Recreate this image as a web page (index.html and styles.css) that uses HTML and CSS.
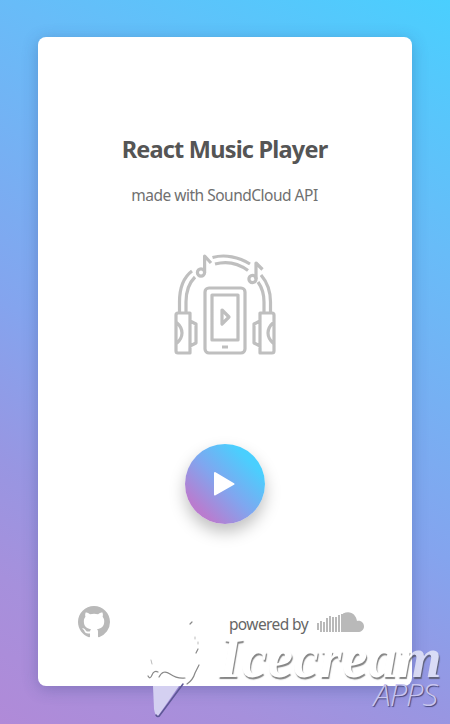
FILE: index.html
```html
<!DOCTYPE html>
<html lang="en">
<head>
<meta charset="utf-8">
<title>React Music Player</title>
<link rel="stylesheet" href="styles.css">
</head>
<body>
<main class="card">
  <h1 class="title">React Music Player</h1>
  <p class="subtitle">made with SoundCloud API</p>
  <svg class="headphones" viewBox="0 0 102 102" fill="none" stroke="#bfbfbf" stroke-width="3.200" stroke-linejoin="round">
    <path d="M5.500 60V49C5.500 35 10 24 18 18M12 60V49C12 38 15 30 21 24M38.500 4.500C51 1 65 4 76 11M41 11C52 8 64 10 74 17.500M87 22C93 29 96.500 38 96.500 49V60M84 29C89 36 90 42 90 49V60" />
    <path d="M2 62Q2 60 4 60H16V100H4Q2 100 2 98ZM2 69Q8 74 8 80T2 91M16 68L22 71V90L16 93M100 62Q100 60 98 60H86V100H98Q100 100 100 98ZM100 69Q94 74 94 80T100 91M86 68L80 71V90L86 93" />
    <rect x="31" y="35" width="40" height="65" rx="4"/>
    <path d="M38 42H64V87H38ZM48 57L55 64L48 71ZM48 94H54" />
    <circle cx="27" cy="19.500" r="3.600"/><path d="M30.600 19.500V3L37 10"/>
    <circle cx="78.500" cy="26" r="3.600"/><path d="M82 26V10L88.500 16.500"/>
  </svg>
  <button class="play" aria-label="Play">
    <svg viewBox="0 0 24 26"><path d="M3 2L21.500 13L3 23.500Z" fill="#fff" stroke="#fff" stroke-width="2" stroke-linejoin="round"/></svg>
  </button>
  <footer class="footer">
    <svg class="github" viewBox="0 0 16 16" fill="#b9b9b9"><path d="M8 0C3.580 0 0 3.580 0 8c0 3.540 2.290 6.530 5.470 7.590.4.070.55-.17.55-.38 0-.19-.01-.82-.01-1.490-2.010.37-2.530-.49-2.690-.94-.09-.23-.48-.94-.82-1.130-.28-.15-.68-.52-.01-.53.63-.01 1.080.58 1.230.82.72 1.210 1.870.87 2.330.66.07-.52.28-.87.51-1.070-1.780-.2-3.640-.89-3.640-3.950 0-.87.31-1.590.82-2.150-.08-.2-.36-1.020.08-2.120 0 0 .67-.21 2.200.82.64-.18 1.320-.27 2-.27s1.360.09 2 .27c1.530-1.040 2.200-.82 2.200-.82.44 1.100.16 1.920.08 2.120.51.56.82 1.270.82 2.150 0 3.070-1.870 3.750-3.650 3.950.29.25.54.73.54 1.480 0 1.070-.01 1.930-.01 2.200 0 .21.15.46.55.38A8.010 8.010 0 0 0 16 8c0-4.420-3.580-8-8-8Z"/></svg>
    <div class="credit">
      <span>powered by</span>
      <svg class="cloud" viewBox="0 0 48 21" fill="#b9b9b9">
        <path d="M26 1.500C34 -2 39 3 40 9C44 8 47 11 47 14.500S44 20 41 20H26Z"/>
        <path d="M1 11V18M4 9V20M7 10V20M10 6V20M13 4V20M16 5V20M19 5V20M22 3V20M25 2V20" stroke="#b9b9b9" stroke-width="2"/>
      </svg>
    </div>
  </footer>
</main>
<div class="watermark">
  <svg class="cone" viewBox="0 0 62 100" fill="none" stroke="#888" stroke-width="1.200" stroke-linecap="round">
    <path d="M7 68H33L12 98Q9 98 8 91Z" fill="#d4d0f1" stroke="none"/>
    <path d="M37 66L14 97Q12 100 10 97" stroke="#5d5795" stroke-width="1.500"/>
    <path d="M2 58Q4 62 6 57T12 54M13 59Q17 51 24 56T39 60M41 66Q47 62 49 55L53 47M50 35L52 31M44 6L46 4"/>
    <path d="M5 42L6 46M49 19V21M52 24V26" stroke="#bbb" stroke-width="1"/>
  </svg>
  <div class="mark"><span class="brand">Icecream</span><span class="apps">APPS</span></div>
</div>
</body>
</html>
```
FILE: styles.css
```css
* { box-sizing: border-box; }
body {
  margin: 0;
  width: 450px;
  height: 724px;
  padding: 37px 38px 38px;
  overflow: hidden;
  position: relative;
  font-family: "Noto Sans", "Open Sans", sans-serif;
  color: #555;
  background: linear-gradient(30deg, #b08ad8 0%, #a690dc 15%, #9896e2 27%, #84a4ee 43%, #68bcf8 74%, #4acffe 100%);
}
.card {
  height: 649px;
  display: flex;
  flex-direction: column;
  align-items: center;
  padding: 95px 1px 0 0;
  border-radius: 8px;
  background: #fff;
  box-shadow: 0 3px 16px rgba(40, 60, 120, .3);
}
.title { margin: 0; font-size: 23.500px; line-height: 34px; font-weight: 700; letter-spacing: -.8px; white-space: nowrap; }
.subtitle { margin: 17px 0 0; font-size: 15.500px; line-height: 24px; letter-spacing: -.5px; color: #707070; white-space: nowrap; }
.headphones { width: 102px; height: 102px; margin-top: 46px; flex: none; }
.play {
  width: 80px;
  height: 80px;
  margin-top: 89px;
  padding: 0;
  border: 0;
  border-radius: 50%;
  flex: none;
  display: flex;
  align-items: center;
  justify-content: center;
  background: linear-gradient(45deg, #b97ccf 18%, #80a6ef 48%, #4acffe 80%);
  box-shadow: 0 8px 16px rgba(0, 0, 0, .25);
}
.play svg { width: 24px; height: 26px; margin-right: 1px; }
.footer {
  width: 100%;
  margin-top: 80px;
  padding: 0 46px 0 40px;
  display: flex;
  justify-content: space-between;
  align-items: center;
}
.github { width: 32px; height: 32px; margin-top: 2px; }
.credit { display: flex; align-items: center; gap: 9px; margin-top: 6px; font-size: 15.500px; letter-spacing: -.6px; color: #666; }
.cloud { width: 48px; height: 21px; margin-top: -4px; }
.watermark {
  position: absolute;
  left: 146px;
  top: 618px;
  width: 304px;
  height: 106px;
  display: flex;
}
.cone { width: 62px; height: 100px; flex: none; }
.mark { display: flex; flex-direction: column; width: 242px; }
.brand {
  margin-top: 18px;
  padding-left: 11px;
  font: italic 700 57px/44px "Liberation Serif", serif;
  letter-spacing: .6px;
  color: #fff;
  opacity: .65;
  text-shadow: 1px 1.500px 1px #444;
}
.apps {
  align-self: flex-end;
  margin: -1px 13px 0 0;
  font: italic 300 31px/30px "Open Sans", sans-serif;
  letter-spacing: -1px;
  color: #c8c5ef;
  text-shadow: 1px 1px 1px #444477;
}
```
